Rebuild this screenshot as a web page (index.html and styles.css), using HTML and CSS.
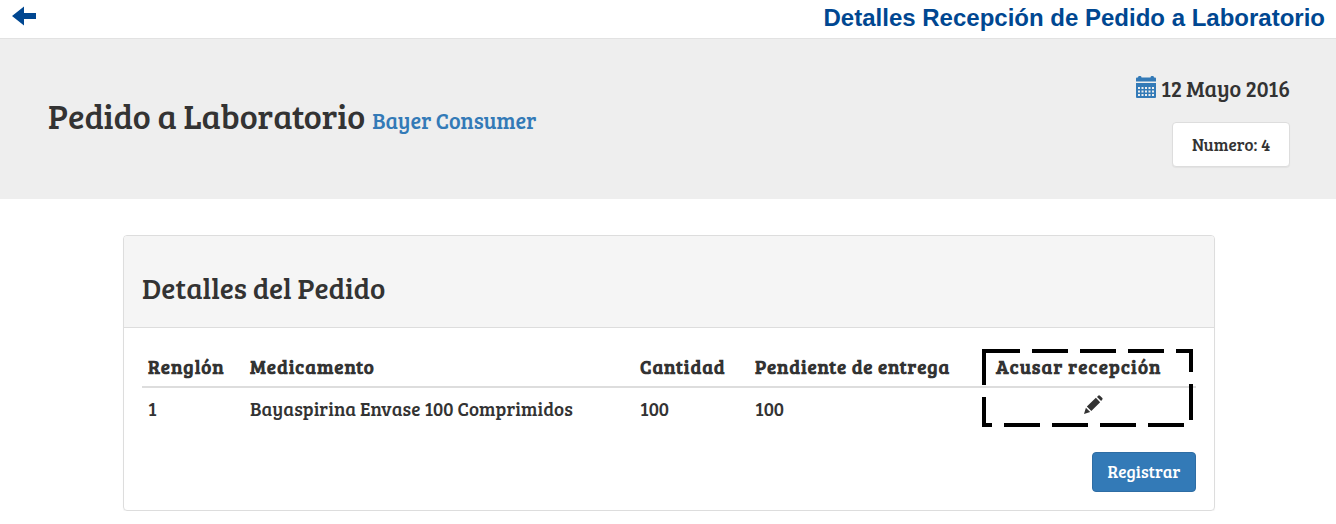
FILE: index.html
```html
<!DOCTYPE html>
<html lang="es">
<head>
<meta charset="utf-8">
<title>Detalles Recepción de Pedido a Laboratorio</title>
<link rel="stylesheet" href="styles.css">
</head>
<body>
<header class="topbar">
  <a class="back" href="#" aria-label="Volver"><svg width="24" height="20" viewBox="0 0 24 20"><path d="M0 10 12 .5V7h12v6H12v6.500z" fill="#004791"/></svg></a>
  <h1 class="topbar-title"><span>Detalles Recepción de Pedido a Laboratorio</span></h1>
</header>
<section class="hero">
  <h2 class="hero-title"><span class="order">Pedido a Laboratorio</span><small class="lab">Bayer Consumer</small></h2>
  <div class="meta">
    <div class="date">
      <svg class="calendar" width="20" height="22" viewBox="0 0 20 22">
        <path fill="#337ab7" d="M0 5.500V2.500Q0 1.500 1 1.500H2Q2 0 3 0h1.500Q5.500 0 5.500 1.500h9Q14.500 0 15.500 0h1.500Q18 0 18 1.500h1Q20 1.500 20 2.500V5.500zM0 7h20v14Q20 22 19 22h-18Q0 22 0 21z"/>
        <path d="M2 12h16M2 15.500h16M2 19h16" stroke="#eee" stroke-width="1.900" stroke-dasharray="2 1.500"/>
      </svg>
      <span class="date-text">12 Mayo 2016</span>
    </div>
    <div class="number"><span>Numero: 4</span></div>
  </div>
</section>
<main class="panel">
  <div class="panel-heading"><h3 class="panel-title"><span>Detalles del Pedido</span></h3></div>
  <div class="panel-body">
    <div class="table">
      <div class="row head">
        <div><span>Renglón</span></div><div><span>Medicamento</span></div><div><span>Cantidad</span></div><div><span class="h-pend">Pendiente de entrega</span></div><div><span class="h-ack">Acusar recepción</span></div>
      </div>
      <div class="row">
        <div>1</div><div><span class="c-med">Bayaspirina Envase 100 Comprimidos</span></div><div><span>100</span></div><div><span>100</span></div>
        <div class="edit"><svg width="19" height="19" viewBox="0 0 20 20"><path fill="#333" d="M0 20 2 13.500 6.500 18zM3 12.200 12.500 3 17 7.500 7.700 16.800zM13.700 2 15.200.600Q16 0 16.800.700L19.300 3.200Q20 4 19.300 4.800L18 6.300z"/></svg></div>
      </div>
      <svg class="highlight" width="211" height="78" viewBox="0 0 211 78"><path d="M2 2H209V76H2Z" fill="none" stroke="#000" stroke-width="4" stroke-dasharray="36 12"/></svg>
    </div>
    <button class="submit"><span>Registrar</span></button>
  </div>
</main>
</body>
</html>
```
FILE: styles.css
```css
* { box-sizing: border-box; }
body {
  margin: 0;
  background: #fff;
  color: #333;
  font-family: "Bree Serif", "DejaVu Serif Condensed", "DejaVu Serif", serif;
  font-stretch: condensed;
}
h1, h2, h3 { margin: 0; font-weight: 400; white-space: nowrap; }
span, small { white-space: nowrap; }
.topbar {
  display: flex;
  justify-content: space-between;
  height: 39px;
  padding: 0 11px 0 12px;
  border-bottom: 1px solid #e2e2e2;
}
.back { height: 20px; margin-top: 6px; }
.back svg, .calendar, .edit svg { display: block; }
.topbar-title {
  color: #004791;
  font: bold 24px/36px "Liberation Sans", Arial, sans-serif;
}
.hero {
  display: flex;
  justify-content: space-between;
  height: 160px;
  padding: 0 46px 0 48px;
  background: #eee;
}
.hero-title { display: flex; align-items: baseline; gap: 7px; padding-top: 56px; line-height: 42px; }
.order { font-size: 34px; letter-spacing: -.07px; }
.lab { color: #337ab7; font-size: 22px; }
.meta { display: flex; flex-direction: column; align-items: flex-end; }
.date { display: flex; gap: 5px; padding-top: 37px; height: 83px; }
.date-text { font-size: 22px; line-height: 25px; letter-spacing: -.06px; }
.number {
  display: flex;
  justify-content: center;
  width: 118px;
  height: 45px;
  background: #fff;
  border: 1px solid #ddd;
  border-radius: 4px;
  box-shadow: 0 1px 1px rgba(0, 0, 0, .05);
  font-size: 17px;
  line-height: 44px;
  letter-spacing: .08px;
}
.panel {
  width: 1092px;
  height: 276px;
  margin: 36px 0 0 123px;
  border: 1px solid #ddd;
  border-radius: 4px;
  box-shadow: 0 1px 1px rgba(0, 0, 0, .05);
}
.panel-heading {
  height: 92px;
  padding: 34px 18px 0;
  background: #f5f5f5;
  border-bottom: 1px solid #ddd;
  border-radius: 3px 3px 0 0;
}
.panel-title { font-size: 29px; line-height: 36px; letter-spacing: -.03px; }
.panel-body { display: flex; flex-direction: column; align-items: flex-end; padding: 18px; }
.table { position: relative; width: 1054px; height: 106px; }
.row {
  display: grid;
  grid-template-columns: 102px 390px 115px 241px 200px;
  padding-left: 6px;
  height: 46px;
  font-size: 19px;
  line-height: 42px;
}
.head {
  height: 42px;
  border-bottom: 2px solid #ddd;
  line-height: 42px;
  font-weight: 700;
  letter-spacing: .95px;
}
.h-pend { letter-spacing: .85px; }
.h-ack { letter-spacing: 1.15px; }
.c-med { letter-spacing: .07px; }
.edit { padding: 7px 0 0 88px; }
.highlight { position: absolute; left: 840px; top: 3px; }
.submit {
  width: 104px;
  height: 40px;
  padding: 0 0 2px;
  color: #fff;
  background: #337ab7;
  border: 1px solid #2e6da4;
  border-radius: 4px;
  font: inherit;
  font-size: 17px;
  letter-spacing: .05px;
}
```
